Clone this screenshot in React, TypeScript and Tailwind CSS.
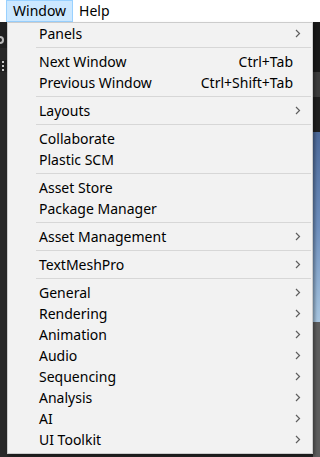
type Item =
  | { kind: 'sep' }
  | { kind: 'item'; label: string; shortcut?: string; sub?: boolean };

const items: Item[] = [
  { kind: 'item', label: 'Panels', sub: true },
  { kind: 'sep' },
  { kind: 'item', label: 'Next Window', shortcut: 'Ctrl+Tab' },
  { kind: 'item', label: 'Previous Window', shortcut: 'Ctrl+Shift+Tab' },
  { kind: 'sep' },
  { kind: 'item', label: 'Layouts', sub: true },
  { kind: 'sep' },
  { kind: 'item', label: 'Collaborate' },
  { kind: 'item', label: 'Plastic SCM' },
  { kind: 'sep' },
  { kind: 'item', label: 'Asset Store' },
  { kind: 'item', label: 'Package Manager' },
  { kind: 'sep' },
  { kind: 'item', label: 'Asset Management', sub: true },
  { kind: 'sep' },
  { kind: 'item', label: 'TextMeshPro', sub: true },
  { kind: 'sep' },
  { kind: 'item', label: 'General', sub: true },
  { kind: 'item', label: 'Rendering', sub: true },
  { kind: 'item', label: 'Animation', sub: true },
  { kind: 'item', label: 'Audio', sub: true },
  { kind: 'item', label: 'Sequencing', sub: true },
  { kind: 'item', label: 'Analysis', sub: true },
  { kind: 'item', label: 'AI', sub: true },
  { kind: 'item', label: 'UI Toolkit', sub: true },
];

const Chevron = () => (
  <svg width="6" height="9" viewBox="0 0 6 9" className="shrink-0">
    <polyline points="1,1 4.5,4.5 1,8" fill="none" stroke="#5f5f5f" strokeWidth="1.2" />
  </svg>
);

export default function App() {
  return (
    <div
      className="relative w-[320px] h-[457px] overflow-hidden bg-[#262626] text-black"
      style={{ fontFamily: '"Noto Sans", "Open Sans", sans-serif' }}
    >
      {/* menu bar */}
      <div className="h-[22px] bg-white flex items-stretch text-[14px] leading-none">
        <div className="ml-[6px] px-[6px] flex items-center bg-[#cce8ff] border border-[#99d1ff]">Window</div>
        <div className="px-[6px] flex items-center">Help</div>
      </div>

      {/* editor behind the menu */}
      <div className="flex h-[435px]">
        <div className="w-[7px] bg-[#202020] flex flex-col">
          <div className="h-[14px]" />
          <div className="w-[4px] h-[8px] rounded-r-full border-2 border-l-0 border-[#b8b8b8]" />
          <div className="h-[12px] bg-[#282828] mt-[4px]" />
          <div className="flex flex-col gap-[2px] pl-[2px] py-[1px]">
            <div className="w-[2px] h-[2px] bg-[#c8c8c8]" />
            <div className="w-[2px] h-[2px] bg-[#c8c8c8]" />
            <div className="w-[2px] h-[2px] bg-[#c8c8c8]" />
          </div>
          <div className="flex-1 bg-[#282828]" />
        </div>
        <div className="flex-1" />
        <div className="w-[7px] flex flex-col">
          <div className="h-[50px] bg-[#191919]" />
          <div className="h-[25px] bg-[#3c3c3c]" />
          <div className="h-[35px] bg-[#1f1f1f]" />
          <div className="h-[190px] bg-gradient-to-b from-[#4d6a9a] via-[#6e8fbd] to-[#a8c6e0]" />
          <div className="flex-1 bg-[#5e5e5e]" />
        </div>
      </div>

      {/* dropdown */}
      <div className="absolute left-[7px] top-[22px] w-[306px] bg-[#f2f2f2] border border-[#cccccc] pb-[3px] shadow-[2px_2px_3px_rgba(0,0,0,0.35)] text-[14px]">
        {items.map((it, i) =>
          it.kind === 'sep' ? (
            <div key={i} className="h-[7px] flex items-center pl-[28px] pr-[1px]">
              <div className="h-px w-full bg-[#d7d7d7]" />
            </div>
          ) : (
            <div key={i} className="h-[21px] flex items-center pl-[31px] pr-[11px] leading-none">
              <span className="flex-1">{it.label}</span>
              {it.shortcut && <span className="mr-[8px]">{it.shortcut}</span>}
              {it.sub && <Chevron />}
            </div>
          )
        )}
      </div>
    </div>
  );
}
